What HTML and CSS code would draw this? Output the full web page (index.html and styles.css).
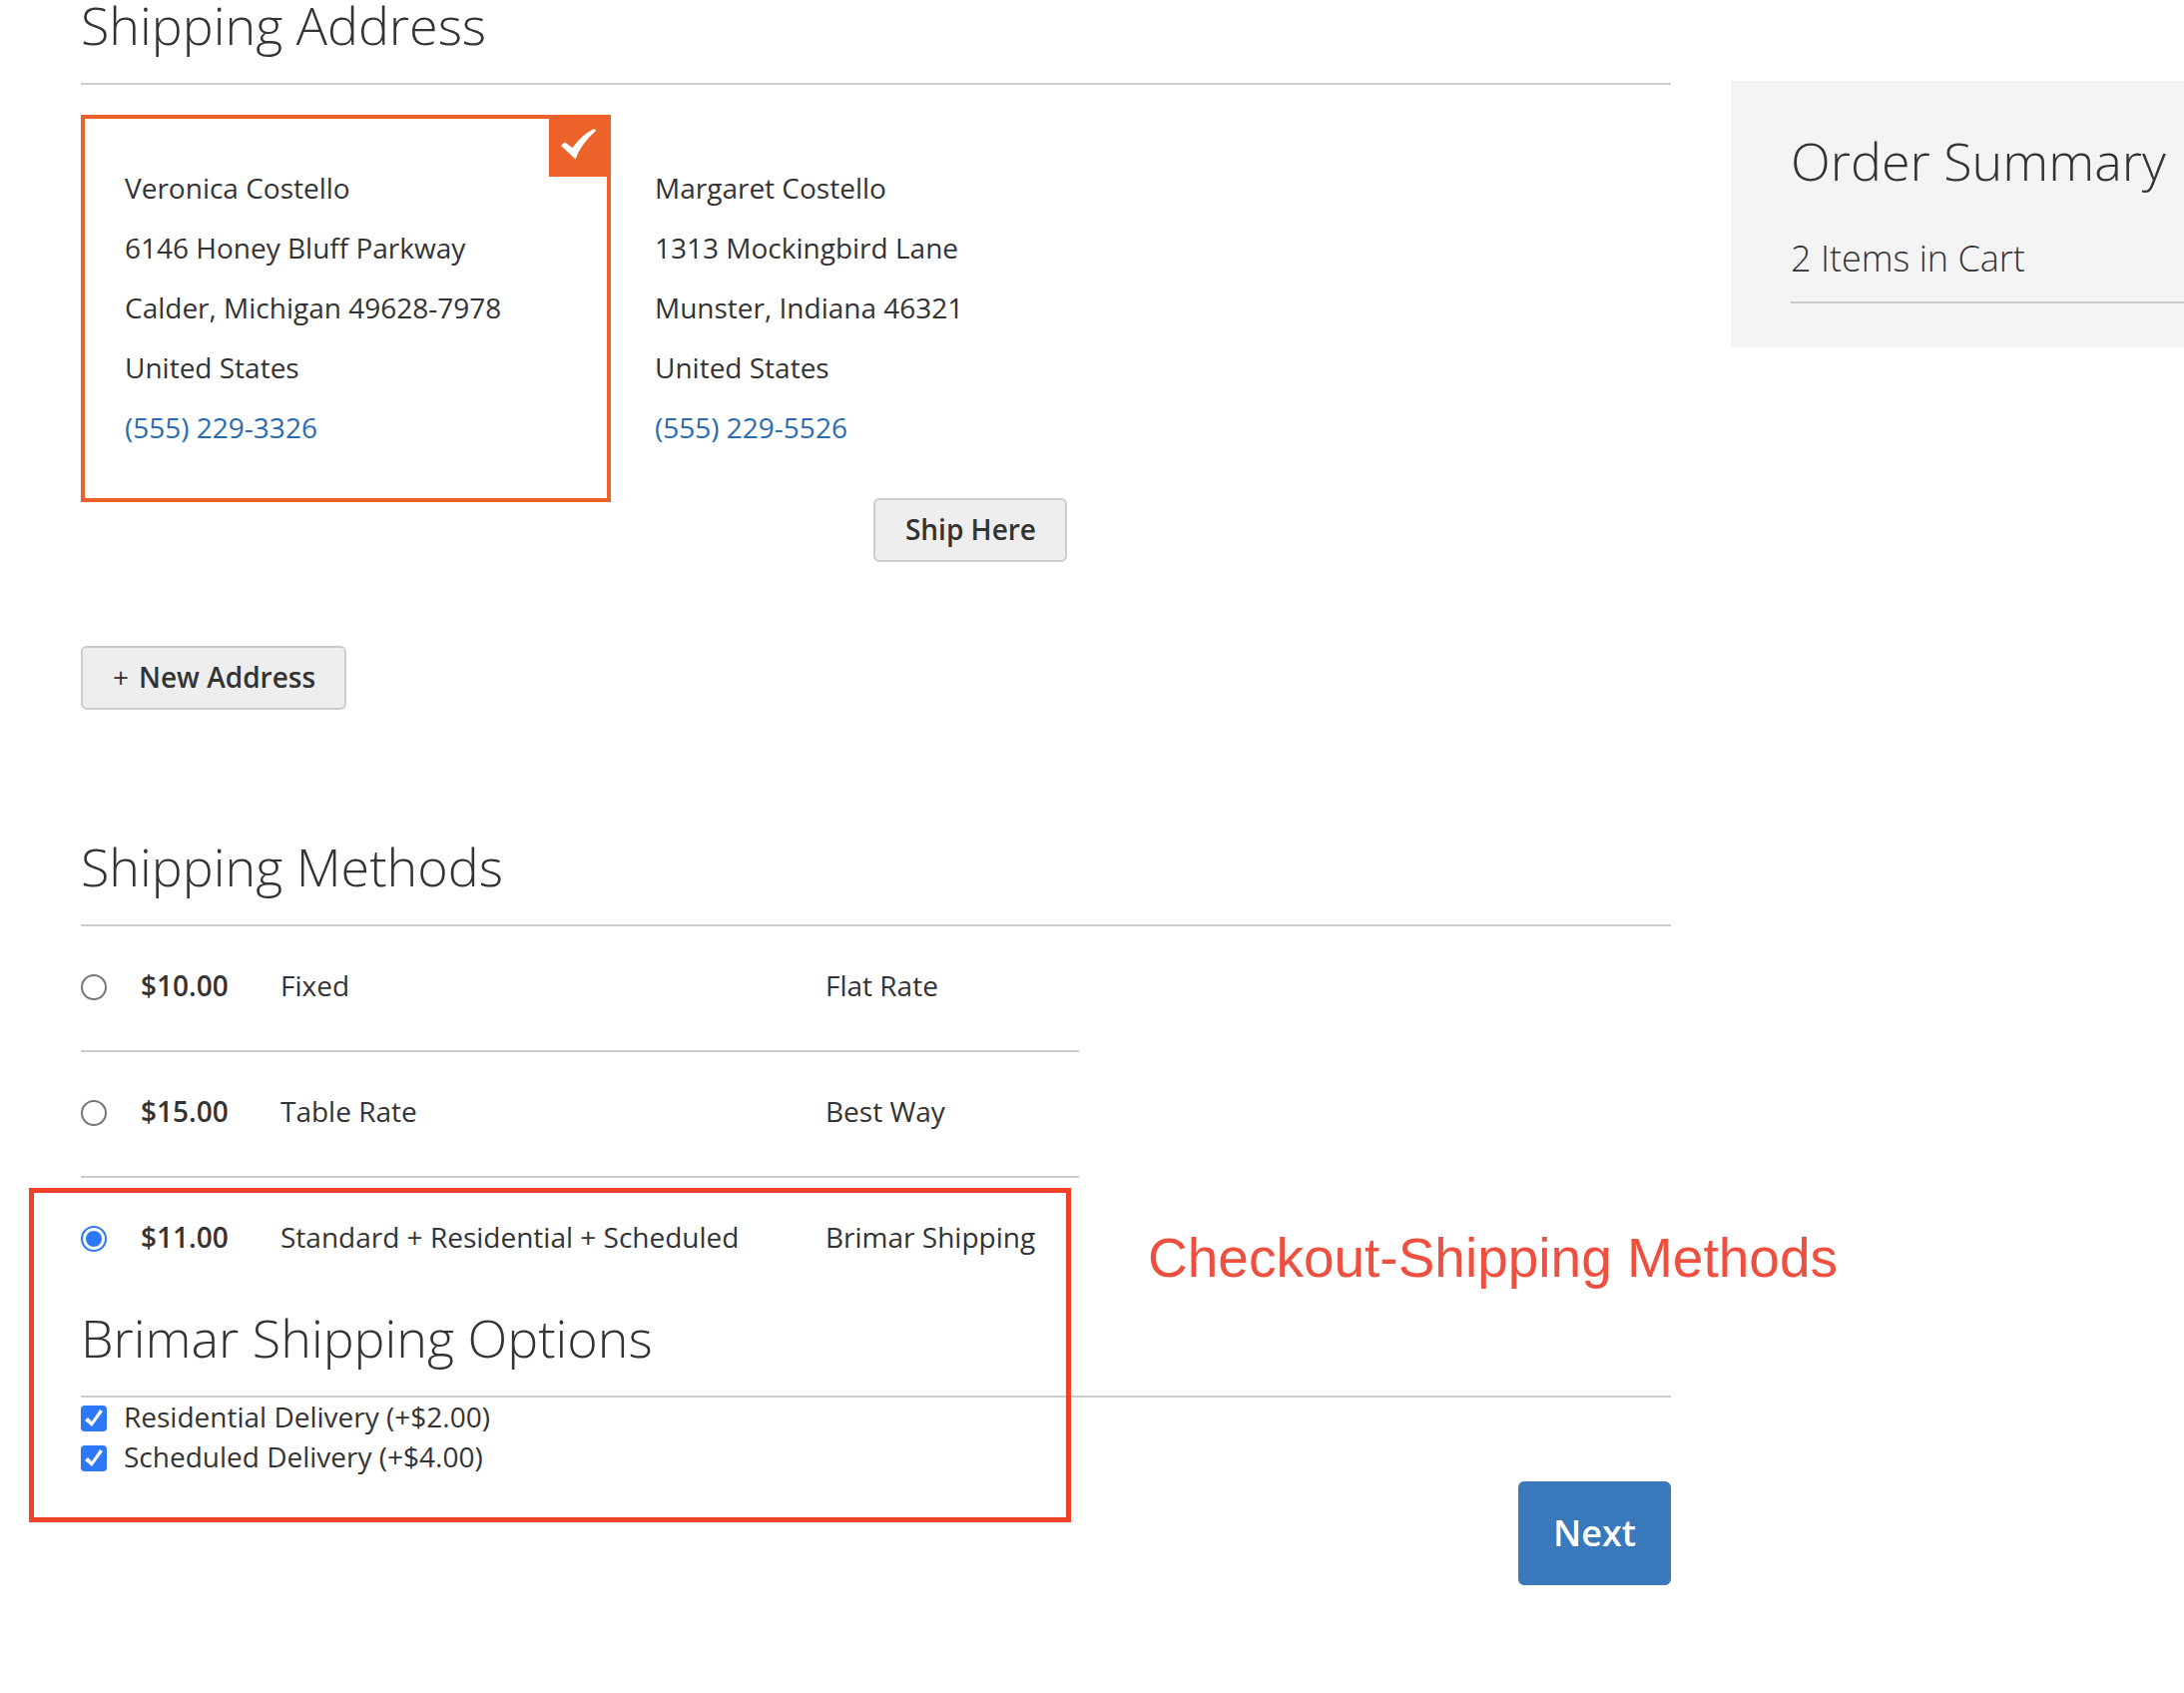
FILE: index.html
```html
<!DOCTYPE html>
<html lang="en">
<head>
<meta charset="utf-8">
<title>Checkout</title>
<link rel="stylesheet" href="styles.css">
</head>
<body>
<div class="checkout">
  <main class="steps">
    <section class="shipping-address">
      <h2 class="step-title">Shipping Address</h2>
      <div class="addresses">
        <article class="address selected">
          <span class="badge">
            <svg class="badge-icon" viewBox="0 0 36 31" aria-label="Selected"><path d="M1 17 4.500 13.500Q5.500 13.500 7 15L12.500 19Q22 6 33 .5Q36-.5 36 2Q21 15 15.500 30.500Z"/></svg>
          </span>
          <p>Veronica Costello<br>6146 Honey Bluff Parkway<br>Calder, Michigan 49628-7978<br>United States<br><a href="tel:5552293326">(555) 229-3326</a></p>
        </article>
        <article class="address">
          <p>Margaret Costello<br>1313 Mockingbird Lane<br>Munster, Indiana 46321<br>United States<br><a href="tel:5552295526">(555) 229-5526</a></p>
          <div class="address-actions">
            <button type="button" class="button">Ship Here</button>
          </div>
        </article>
      </div>
      <button type="button" class="button"><span class="plus">+</span>New Address</button>
    </section>

    <form class="shipping-methods">
      <h2 class="step-title">Shipping Methods</h2>
      <table class="methods">
        <tbody>
          <tr>
            <td class="col-select"><input class="radio" type="radio" name="method" id="fixed"></td>
            <td class="col-price"><label for="fixed">$10.00</label></td>
            <td class="col-name">Fixed</td>
            <td>Flat Rate</td>
          </tr>
          <tr>
            <td class="col-select"><input class="radio" type="radio" name="method" id="table-rate"></td>
            <td class="col-price"><label for="table-rate">$15.00</label></td>
            <td class="col-name">Table Rate</td>
            <td>Best Way</td>
          </tr>
          <tr>
            <td class="col-select"><input class="radio" type="radio" name="method" id="brimar" checked></td>
            <td class="col-price"><label for="brimar">$11.00</label></td>
            <td class="col-name">Standard + Residential + Scheduled</td>
            <td>Brimar Shipping</td>
          </tr>
        </tbody>
      </table>
      <h2 class="step-title options-title">Brimar Shipping Options</h2>
      <div class="option">
        <input class="checkbox" type="checkbox" id="residential" checked>
        <label for="residential">Residential Delivery (+$2.00)</label>
      </div>
      <div class="option">
        <input class="checkbox" type="checkbox" id="scheduled" checked>
        <label for="scheduled">Scheduled Delivery (+$4.00)</label>
      </div>
      <div class="actions">
        <button type="submit" class="button primary">Next</button>
      </div>
      <div class="highlight"></div>
      <p class="note">Checkout-Shipping Methods</p>
    </form>
  </main>

  <aside class="summary">
    <h2 class="summary-title">Order Summary</h2>
    <p class="summary-items">2 Items in Cart</p>
  </aside>
</div>
</body>
</html>
```

FILE: styles.css
```css
* {
  box-sizing: border-box;
}

body {
  margin: 0;
  background: #fff;
  color: #333;
  font: 400 28px/40px "Open Sans", "Noto Sans", sans-serif;
}

h2,
p {
  margin: 0;
}

a {
  color: #2b6cb0;
  text-decoration: none;
}

.checkout {
  display: grid;
  grid-template-columns: minmax(0, 1593fr) minmax(0, 454fr);
  gap: 60px;
  align-items: start;
  padding-left: 81px;
}

.step-title {
  padding-bottom: 33px;
  border-bottom: 2px solid #ccc;
  font-size: 52px;
  font-weight: 300;
  line-height: 50px;
}

/* Addresses */
.addresses {
  display: grid;
  grid-template-columns: repeat(3, minmax(0, 1fr));
  align-items: start;
  margin: 30px 0 39px;
}

.address {
  position: relative;
  padding: 39px 40px 41px;
  border: 4px solid transparent;
  line-height: 60px;
}

.address.selected {
  border-color: #ed612b;
}

.badge {
  position: absolute;
  top: -4px;
  right: -4px;
  display: flex;
  justify-content: center;
  width: 62px;
  height: 62px;
  padding-top: 14px;
  background: #ed612b;
}

.badge-icon {
  width: 36px;
  height: 31px;
  margin-right: 4px;
  fill: #fff;
}

.address-actions {
  display: flex;
  justify-content: flex-end;
  padding: 41px 30px 0 0;
}

.button {
  display: block;
  padding: 13px 29px 15px 30px;
  border: 2px solid #ccc;
  border-radius: 6px;
  background: #eee;
  color: #333;
  font: 600 28px/32px "Open Sans", "Noto Sans", sans-serif;
}

.plus {
  margin-right: 10px;
  font-weight: 400;
}

/* Shipping methods */
.shipping-methods {
  position: relative;
  margin-top: 132px;
}

.methods {
  width: 1000px;
  max-width: 100%;
  border-spacing: 0;
  table-layout: fixed;
}

.methods td {
  padding: 39px 0 45px;
  border-bottom: 2px solid #ccc;
}

.methods tr:last-child td {
  border-bottom: 0;
}

.methods .col-select {
  width: 60px;
}

.methods .col-price {
  width: 140px;
  font-weight: 600;
}

.methods .col-name {
  width: 546px;
}

.radio,
.checkbox {
  display: grid;
  place-content: center;
  width: 26px;
  height: 26px;
  margin: 9px 0 5px;
  appearance: none;
  background: #fff;
}

.radio {
  border: 2px solid #767676;
  border-radius: 50%;
}

.radio:checked {
  border-color: #2d78f7;
}

.radio:checked::before {
  width: 16px;
  height: 16px;
  border-radius: 50%;
  background: #2d78f7;
  content: "";
}

.checkbox {
  margin: 8px 0 6px;
  border-radius: 4px;
  background: #2d78f7;
}

.checkbox:checked::before {
  width: 26px;
  height: 26px;
  background: #fff;
  clip-path: polygon(4px 15px, 7px 12px, 11px 16px, 19px 4px, 22px 6px, 11px 21px);
  content: "";
}

.options-title {
  margin-top: 11px;
}

.option {
  display: flex;
  gap: 17px;
  line-height: 38px;
}

.actions {
  display: flex;
  justify-content: flex-end;
  padding-top: 4px;
}

.button.primary {
  padding: 28px 33px;
  border-color: #3878bb;
  background: #3878bb;
  color: #fff;
  font-size: 36px;
  line-height: 44px;
}

/* Annotation over the form */
.highlight {
  position: absolute;
  top: 347px;
  left: -52px;
  width: 1044px;
  height: 335px;
  border: 5px solid #ee4127;
  pointer-events: none;
}

.note {
  position: absolute;
  top: 385px;
  left: 1069px;
  color: #ee4f3f;
  font: 55px/64px "Liberation Sans", Arial, sans-serif;
  white-space: nowrap;
}

/* Order summary */
.summary {
  margin-top: 81px;
  padding: 44px 0 44px 60px;
  background: #f4f4f4;
  font-weight: 300;
}

.summary-title {
  font-size: 52px;
  font-weight: 300;
  line-height: 72px;
}

.summary-items {
  padding: 37px 0 18px;
  border-bottom: 2px solid #ccc;
  font-size: 36px;
  line-height: 50px;
}
```
